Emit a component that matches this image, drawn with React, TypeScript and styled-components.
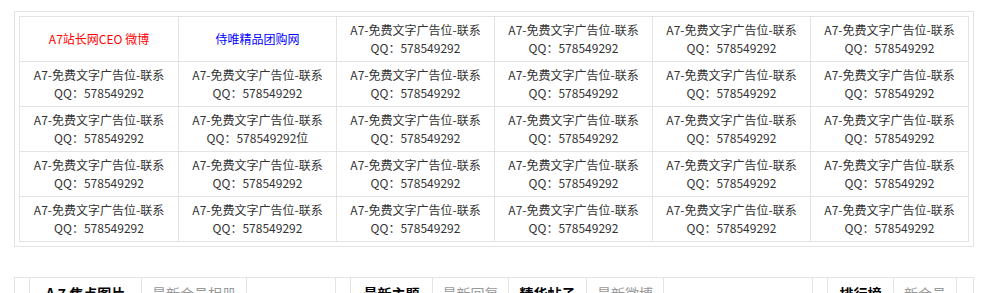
import React from "react";
import styled, { createGlobalStyle } from "styled-components";

const Global = createGlobalStyle`
  html, body { margin: 0; padding: 0; background: #fff; }
  body { font-family: "Noto Sans CJK SC", "Noto Sans", sans-serif; font-size: 12px; color: #333; }
`;

const Page = styled.div`
  padding: 11px 0 0 14px;
  width: 960px;
`;

const AdBox = styled.div`
  width: 960px;
  box-sizing: border-box;
  border: 1px solid #e3e3e3;
  padding: 4px;
`;

const AdGrid = styled.div`
  display: grid;
  grid-template-columns: 158px repeat(5, 1fr);
  grid-auto-rows: 44px;
  gap: 1px;
  background: #e3e3e3;
  border: 1px solid #e3e3e3;
`;

const AdCell = styled.a<{ $color?: string }>`
  display: flex;
  align-items: center;
  justify-content: center;
  text-align: center;
  background: #fff;
  color: ${(p) => p.$color || "#333"};
  font-size: 12px;
  line-height: 18px;
  text-decoration: none;
  padding: 0 4px;
`;

const BottomBar = styled.div`
  display: flex;
  margin-top: 30px;
  height: 40px;
`;

const Panel = styled.div<{ $w: number; $last?: boolean }>`
  width: ${(p) => p.$w}px;
  box-sizing: border-box;
  border-top: 1px solid #e3e3e3;
  border-left: 1px solid #e3e3e3;
  border-right: ${(p) => (p.$last ? "1px solid #e3e3e3" : "none")};
  padding-left: 14px;
  display: flex;
  align-items: flex-start;
`;

const Tabs = styled.div`
  display: flex;
  border-left: 1px solid #e3e3e3;
  height: 40px;
`;

const Tab = styled.div<{ $w: number; $active?: boolean }>`
  width: ${(p) => p.$w}px;
  box-sizing: border-box;
  border-right: 1px solid #e3e3e3;
  text-align: center;
  font-size: 14px;
  line-height: 30px;
  font-weight: ${(p) => (p.$active ? 700 : 400)};
  color: ${(p) => (p.$active ? "#000" : "#999")};
  white-space: nowrap;
`;

const AD = (
  <>
    A7-免费文字广告位-联系
    <br />
    QQ：578549292
  </>
);

type Cell = { content: React.ReactNode; color?: string };

const cells: Cell[] = [];
cells.push({ content: "A7站长网CEO 微博", color: "#ff0000" });
cells.push({ content: "侍唯精品团购网", color: "#0000ff" });
for (let i = 2; i < 30; i++) {
  if (i === 13) {
    cells.push({
      content: (
        <>
          A7-免费文字广告位-联系
          <br />
          QQ：578549292位
        </>
      ),
    });
  } else {
    cells.push({ content: AD });
  }
}

const panels = [
  {
    w: 321,
    tabs: [
      { label: "A 7 焦点图片", w: 112, active: true },
      { label: "最新会员相册", w: 105 },
    ],
  },
  {
    w: 477,
    tabs: [
      { label: "最新主题", w: 82, active: true },
      { label: "最新回复", w: 76 },
      { label: "精华帖子", w: 78, active: true },
      { label: "最新微博", w: 77 },
    ],
  },
  {
    w: 162,
    last: true,
    tabs: [
      { label: "排行榜", w: 66, active: true },
      { label: "新会员", w: 63 },
    ],
  },
];

export default function App() {
  return (
    <>
      <Global />
      <Page>
        <AdBox>
          <AdGrid>
            {cells.map((c, i) => (
              <AdCell key={i} href="#" $color={c.color}>
                <span>{c.content}</span>
              </AdCell>
            ))}
          </AdGrid>
        </AdBox>
        <BottomBar>
          {panels.map((p, i) => (
            <Panel key={i} $w={p.w} $last={p.last}>
              <Tabs>
                {p.tabs.map((t, j) => (
                  <Tab key={j} $w={t.w} $active={t.active}>
                    {t.label}
                  </Tab>
                ))}
              </Tabs>
            </Panel>
          ))}
        </BottomBar>
      </Page>
    </>
  );
}
